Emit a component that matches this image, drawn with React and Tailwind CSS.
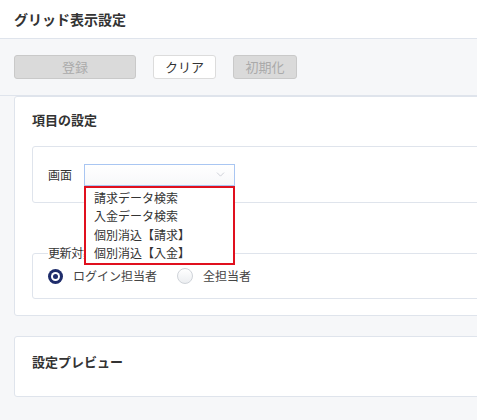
import { ChevronDown } from 'lucide-react';

const screens = ['請求データ検索', '入金データ検索', '個別消込【請求】', '個別消込【入金】'];

const Radio = ({ checked, label }) => (
  <label className="flex items-center gap-[10px] text-[12px] text-[#444]">
    {checked ? (
      <span className="w-[15px] h-[15px] rounded-full bg-[#1f2d6b] flex items-center justify-center">
        <span className="w-[9px] h-[9px] rounded-full bg-white flex items-center justify-center">
          <span className="w-[5px] h-[5px] rounded-full bg-[#1f2d6b]" />
        </span>
      </span>
    ) : (
      <span className="w-[16px] h-[16px] rounded-full border border-[#cfd3d9] bg-gradient-to-b from-white to-[#eceef1]" />
    )}
    {label}
  </label>
);

const Button = ({ children, disabled, className }) => (
  <button
    className={
      disabled
        ? `h-[24px] rounded-[3px] border border-[#c9c9c9] bg-[#dadada] text-[#aaa] text-[13px] ${className}`
        : `h-[24px] rounded-[3px] border border-[#dcdcdc] bg-white text-[#333] text-[13px] ${className}`
    }
  >
    {children}
  </button>
);

export default function App() {
  return (
    <div
      className="w-[477px] h-[420px] overflow-hidden bg-[#f6f7f9]"
      style={{ fontFamily: '"Noto Sans CJK JP", "Noto Sans", sans-serif' }}
    >
      {/* header */}
      <div className="h-[39px] bg-white border-b border-[#dfe4ec] px-[14px] flex items-center">
        <h1 className="text-[14px] font-bold text-[#333]">グリッド表示設定</h1>
      </div>

      {/* toolbar */}
      <div className="h-[57px] border-b border-[#dfe4ec] px-[14px] flex items-center gap-[17px]">
        <Button disabled className="w-[122px]">登録</Button>
        <Button className="w-[63px]">クリア</Button>
        <Button disabled className="w-[64px]">初期化</Button>
      </div>

      <div className="pl-[14px]">
        {/* item settings */}
        <div className="w-[600px] h-[220px] bg-white border border-[#dfe4ec] rounded-[3px] px-[17px] pt-[13px]">
          <h2 className="text-[13px] font-bold text-[#333] leading-[20px]">項目の設定</h2>

          <div className="mt-[16px] h-[57px] border border-[#dfe4ec] rounded-[3px] pl-[15px] flex items-center gap-[12px]">
            <span className="text-[12px] text-[#333]">画面</span>
            <div className="relative">
              <div className="w-[151px] h-[22px] border border-[#a9c6f2] bg-gradient-to-b from-white to-[#f7f8fa] flex items-center justify-end pr-[7px]">
                <ChevronDown size={13} strokeWidth={1.5} className="text-[#c4c8cf]" />
              </div>
              <ul className="absolute left-0 top-full z-10 w-[151px] h-[79px] border-2 border-[#e0101e] bg-white pl-[8px] pt-[1px]">
                {screens.map((s) => (
                  <li key={s} className="h-[18.5px] flex items-center text-[12px] text-[#333]">
                    {s}
                  </li>
                ))}
              </ul>
            </div>
          </div>

          {/* update target group */}
          <div className="relative mt-[50px] h-[46px] border border-[#dfe4ec] rounded-[3px] pl-[15px] pr-[15px] flex items-center">
            <span className="absolute left-[15px] -top-[8px] bg-white text-[12px] tracking-[-0.4px] leading-[14px] text-[#333]">
              更新対象
            </span>
            <div className="flex items-center gap-[20px]">
              <Radio checked label="ログイン担当者" />
              <Radio label="全担当者" />
            </div>
          </div>
        </div>

        {/* preview */}
        <div className="mt-[20px] w-[600px] h-[61px] bg-white border border-[#dfe4ec] rounded-[3px] px-[17px] pt-[15px]">
          <h2 className="text-[13px] font-bold text-[#333] leading-[20px]">設定プレビュー</h2>
        </div>
      </div>
    </div>
  );
}
